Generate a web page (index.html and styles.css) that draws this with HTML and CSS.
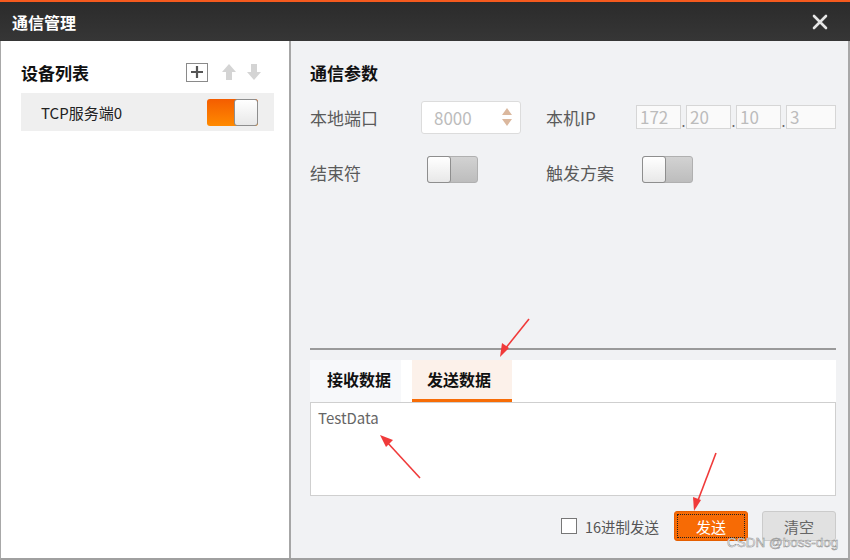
FILE: index.html
```html
<!DOCTYPE html>
<html lang="zh-CN">
<head>
    <meta charset="UTF-8">
    <meta name="viewport" content="width=device-width, initial-scale=1.0">
    <title>通信管理</title>
    <link rel="stylesheet" href="styles.css">
</head>
<body>
    <div class="window">
        <div class="titlebar">
            <span class="title">通信管理</span>
            <svg class="close" width="16" height="16" viewBox="0 0 16 16">
                <path d="M2 2 L14 14 M14 2 L2 14" stroke="#e6e6e6" stroke-width="2.6" stroke-linecap="round"/>
            </svg>
        </div>
        <div class="content">
            <div class="left-panel">
                <div class="panel-head">
                    <span class="heading">设备列表</span>
                    <div class="tools">
                        <span class="add-btn">
                            <svg width="12" height="12" viewBox="0 0 12 12"><path d="M6 0 V12 M0 6 H12" stroke="#555" stroke-width="2.2"/></svg>
                        </span>
                        <svg class="arrow" width="16" height="18" viewBox="0 0 16 18"><path d="M8 1 L15 9 H11 V17 H5 V9 H1 Z" fill="#d4d4d4"/></svg>
                        <svg class="arrow" width="16" height="18" viewBox="0 0 16 18"><path d="M8 17 L15 9 H11 V1 H5 V9 H1 Z" fill="#d4d4d4"/></svg>
                    </div>
                </div>
                <div class="device-row">
                    <span>TCP服务端0</span>
                    <span class="toggle on"><span class="knob"></span></span>
                </div>
            </div>
            <div class="right-panel">
                <div class="panel-head">
                    <span class="heading">通信参数</span>
                </div>
                <div class="params">
                    <span class="label">本地端口</span>
                    <div class="spinbox">
                        <span>8000</span>
                        <span class="spin">
                            <svg width="10" height="22" viewBox="0 0 10 22"><path d="M5 2 L10 9 H0 Z M5 20 L10 13 H0 Z" fill="#dbb89e"/></svg>
                        </span>
                    </div>
                    <span class="label">本机IP</span>
                    <div class="ip">
                        <span class="ip-box">172</span><span class="dot">.</span>
                        <span class="ip-box">20</span><span class="dot">.</span>
                        <span class="ip-box">10</span><span class="dot">.</span>
                        <span class="ip-box last">3</span>
                    </div>

                    <span class="label">结束符</span>
                    <div><span class="toggle off"><span class="knob"></span></span></div>
                    <span class="label">触发方案</span>
                    <div><span class="toggle off"><span class="knob"></span></span></div>
                </div>

                <div class="data-area">
                    <div class="tabs">
                        <span class="tab">接收数据</span>
                        <span class="tab active">发送数据</span>
                    </div>
                    <div class="textbox">TestData</div>
                </div>

                <div class="actions">
                    <label class="check"><span class="box"></span>16进制发送</label>
                    <button class="btn send">发送</button>
                    <button class="btn clear">清空</button>
                </div>
            </div>
        </div>

        <svg class="marks" width="850" height="560" viewBox="0 0 850 560">
            <path d="M529 319 L505 349" stroke="#f03a3a" stroke-width="1.6"/>
            <path d="M500 357 L502 343 L509 348 Z" fill="#f03a3a"/>
            <path d="M420 478 L386 441" stroke="#f03a3a" stroke-width="1.6"/>
            <path d="M380 435 L393 440 L386 447 Z" fill="#f03a3a"/>
            <path d="M716 453 L697 503" stroke="#f03a3a" stroke-width="1.6"/>
            <path d="M694 511 L693 497 L701 500 Z" fill="#f03a3a"/>
        </svg>
        <span class="watermark">CSDN @boss-dog</span>
    </div>
</body>
</html>
```

FILE: styles.css
```css
body {
    margin: 0;
    font-family: "Noto Sans CJK SC", "Noto Sans", sans-serif;
}
.window {
    position: relative;
    width: 850px;
    height: 560px;
    display: flex;
    flex-direction: column;
    overflow: hidden;
}
.titlebar {
    height: 39px;
    border-top: 2px solid #f55a1e;
    background: linear-gradient(#2b2b2b, #363636);
    display: flex;
    align-items: center;
    justify-content: space-between;
    padding: 0 22px 0 12px;
}
.title {
    color: #fff;
    font-size: 16px;
    font-weight: bold;
}
.content {
    flex: 1;
    display: flex;
    border-left: 1px solid #a8a8a8;
    border-right: 2px solid #a8a8a8;
    border-bottom: 2px solid #a0a0a0;
}
.left-panel {
    width: 287px;
    background: #fff;
    border-right: 2px solid #a6a6a6;
    padding: 16px 0 0 20px;
}
.panel-head {
    height: 30px;
    display: flex;
    align-items: center;
    justify-content: space-between;
}
.heading {
    font-size: 17px;
    font-weight: bold;
    color: #111;
}
.left-panel .panel-head {
    padding-right: 27px;
}
.tools {
    display: flex;
    align-items: center;
    gap: 9px;
}
.add-btn {
    width: 20px;
    height: 17px;
    border: 1px solid #8a8a8a;
    display: flex;
    align-items: center;
    justify-content: center;
    margin-right: 4px;
}
.device-row {
    margin-top: 6px;
    width: 253px;
    height: 38px;
    background: #efefef;
    display: flex;
    align-items: center;
    justify-content: space-between;
    box-sizing: border-box;
    padding: 0 16px 0 20px;
    font-size: 15px;
    color: #222;
}
.toggle {
    display: inline-flex;
    width: 51px;
    height: 27px;
    border-radius: 3px;
    box-sizing: border-box;
}
.toggle .knob {
    width: 24px;
    height: 27px;
    box-sizing: border-box;
    border: 1px solid #8e8e8e;
    border-radius: 3px;
    background: linear-gradient(#ffffff, #e8e8e8);
}
.toggle.on {
    background: linear-gradient(#f45d00, #ff8a00);
    justify-content: flex-end;
}
.toggle.off {
    background: linear-gradient(#d2d2d2, #bdbdbd);
    border: 1px solid #b0b0b0;
    margin-left: 6px;
}
.toggle.off .knob {
    margin: -1px 0 0 -1px;
}
.right-panel {
    flex: 1;
    background: #f1f2f4;
    padding: 16px 12px 0 19px;
    display: flex;
    flex-direction: column;
}
.params {
    margin-top: 13px;
    display: grid;
    grid-template-columns: 111px 125px 90px 1fr;
    grid-auto-rows: 34px;
    row-gap: 21px;
    align-items: center;
}
.label {
    font-size: 17px;
    color: #5a5a5a;
}
.spinbox {
    width: 100px;
    height: 33px;
    box-sizing: border-box;
    background: #fff;
    border: 1px solid #dcdcdc;
    border-radius: 3px;
    display: flex;
    align-items: center;
    justify-content: space-between;
    padding: 0 8px 0 12px;
    font-size: 17px;
    color: #bcbcbc;
}
.spin {
    display: flex;
}
.ip {
    display: flex;
    align-items: flex-end;
}
.ip-box {
    width: 45px;
    height: 24px;
    box-sizing: border-box;
    border: 1px solid #d6d6d6;
    background: #fafafa;
    font-size: 17px;
    line-height: 22px;
    color: #bcbcbc;
    padding-left: 3px;
}
.ip-box.last {
    width: 50px;
}
.dot {
    width: 5px;
    font-size: 14px;
    line-height: 16px;
    color: #666;
    text-align: center;
}
.data-area {
    margin-top: 159px;
    border-top: 2px solid #9a9a9a;
    padding-top: 10px;
}
.tabs {
    background: #fff;
    height: 42px;
    display: flex;
    gap: 11px;
}
.tab {
    width: 91px;
    box-sizing: border-box;
    font-size: 16px;
    font-weight: bold;
    color: #111;
    background: #f7f8fa;
    padding-left: 17px;
    line-height: 39px;
    border-bottom: 3px solid transparent;
    white-space: nowrap;
}
.tab.active {
    width: 100px;
    background: #fcf1ea;
    border-bottom-color: #f76c06;
    padding-left: 15px;
}
.textbox {
    height: 94px;
    box-sizing: border-box;
    background: #fff;
    border: 1px solid #cfcfcf;
    padding: 4px 7px;
    font-size: 15px;
    color: #666;
}
.actions {
    margin-top: 15px;
    display: flex;
    justify-content: flex-end;
    align-items: center;
    gap: 14px;
}
.check {
    display: flex;
    align-items: center;
    gap: 8px;
    font-size: 14.5px;
    color: #555;
    margin-right: 1px;
}
.box {
    width: 16px;
    height: 16px;
    box-sizing: border-box;
    border: 1px solid #777;
    background: #fff;
}
.btn {
    width: 74px;
    height: 30px;
    border-radius: 3px;
    font-family: inherit;
    font-size: 15px;
    cursor: pointer;
}
.send {
    background: #f76b05;
    border: 1px solid #e55e00;
    color: #fff;
    outline: 1px dotted #222;
    outline-offset: -4px;
}
.clear {
    background: #e1e1e1;
    border: 1px solid #cbcbcb;
    color: #666;
}
.marks {
    position: absolute;
    left: 0;
    top: 0;
    pointer-events: none;
}
.watermark {
    position: absolute;
    left: 727px;
    top: 535px;
    font-family: "Liberation Sans", sans-serif;
    font-size: 13.5px;
    color: #f8f8f8;
    -webkit-text-stroke: 0.5px #8a8a8a;
}
.close {
    display: block;
}
```
